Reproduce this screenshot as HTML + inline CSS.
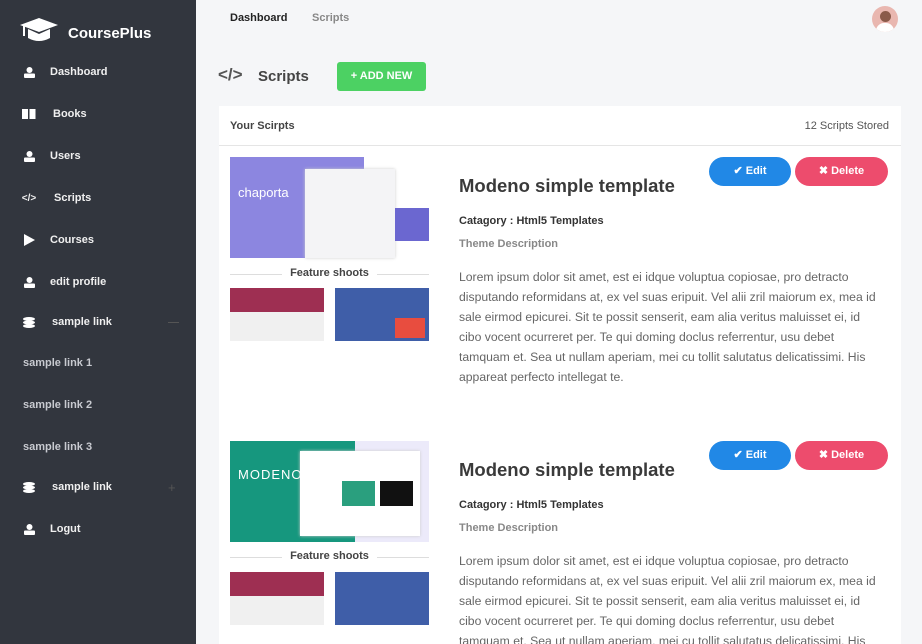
<!DOCTYPE html>
<html><head><meta charset="utf-8"><style>
*{margin:0;padding:0;box-sizing:border-box}
html,body{width:922px;height:644px;overflow:hidden}
body{background:#f5f6f8;font-family:"Liberation Sans",sans-serif;position:relative}
.sb{position:absolute;left:0;top:0;width:196px;height:644px;background:#32363e;color:#fff}
.logo{position:absolute;left:20px;top:17px;display:flex;align-items:center}
.logo span{font-weight:bold;font-size:15px;margin-left:10px;margin-top:8px}
.it{position:absolute;left:0;font-size:11px;font-weight:bold;color:#f0f0f0;display:flex;align-items:center}
.it i{display:inline-flex;justify-content:center;width:16px;margin-left:21px;margin-right:13px;font-style:normal}
.sub{position:absolute;left:23px;font-size:11px;font-weight:bold;color:#c8cad0}
.top{position:absolute;left:230px;top:12px;font-size:11px;font-weight:bold}
.card{position:absolute;left:219px;top:106px;width:682px;height:540px;background:#fff;overflow:hidden}
.hd{height:40px;border-bottom:1px solid #e5e5e5;display:flex;justify-content:space-between;align-items:center;padding:0 12px 0 11px;font-size:11px}
.btn{position:absolute;height:29px;border-radius:15px;color:#fff;font-size:11px;font-weight:bold;text-align:center;line-height:29px}
.h{position:absolute;left:240px;font-size:18.5px;font-weight:bold;color:#3a3a3a}
.cat{position:absolute;left:240px;font-size:11px;font-weight:bold;color:#333}
.td{position:absolute;left:240px;font-size:11px;font-weight:bold;color:#888}
.p{position:absolute;left:240px;white-space:nowrap;font-size:12.2px;line-height:20px;color:#666}
.fs{position:absolute;left:11px;width:199px;font-size:11px;font-weight:bold;color:#444;text-align:center}
.fs:before,.fs:after{content:"";position:absolute;top:7px;width:52px;border-top:1px solid #ddd}
.fs:before{left:0}.fs:after{right:0}
</style></head><body>
<div class="sb">
 <div class="logo"><svg width="38" height="24" viewBox="0 0 38 24"><polygon points="19,0 38,7 19,14 0,7" fill="#fff"/><path d="M8,11 V20 Q19,26 30,20 V11 L19,16 Z" fill="#fff"/><rect x="3" y="8" width="2" height="10" fill="#fff"/></svg><span>CoursePlus</span></div>
 <div class="it" style="top:66px"><i><svg width="11" height="11"><circle cx="5.5" cy="3" r="3" fill="#fff"/><rect x="0" y="6.5" width="11" height="4.5" rx="1" fill="#fff"/></svg></i>Dashboard</div>
 <div class="it" style="top:108px"><i><svg width="14" height="10"><rect x="0" y="0" width="6" height="10" fill="#fff"/><rect x="7.5" y="0" width="6" height="10" fill="#fff"/></svg></i><b style="margin-left:3px">Books</b></div>
 <div class="it" style="top:150px"><i><svg width="11" height="11"><circle cx="5.5" cy="3" r="3" fill="#fff"/><rect x="0" y="6.5" width="11" height="4.5" rx="1" fill="#fff"/></svg></i>Users</div>
 <div class="it" style="top:192px"><i style="font-size:10px">&lt;/&gt;</i><b style="margin-left:4px">Scripts</b></div>
 <div class="it" style="top:234px"><i><svg width="11" height="12"><polygon points="0,0 11,6 0,12" fill="#fff"/></svg></i>Courses</div>
 <div class="it" style="top:276px"><i><svg width="11" height="11"><circle cx="5.5" cy="3" r="3" fill="#fff"/><rect x="0" y="6.5" width="11" height="4.5" rx="1" fill="#fff"/></svg></i>edit profile</div>
 <div class="it" style="top:316px"><i><svg width="12" height="11"><ellipse cx="6" cy="2" rx="6" ry="2" fill="#fff"/><ellipse cx="6" cy="5.5" rx="6" ry="2" fill="#fff"/><ellipse cx="6" cy="9" rx="6" ry="2" fill="#fff"/></svg></i><b style="margin-left:2px">sample link</b></div>
 <div style="position:absolute;left:168px;top:322px;width:11px;border-top:1px solid #555"></div>
 <div class="sub" style="top:357px">sample link 1</div>
 <div class="sub" style="top:399px">sample link 2</div>
 <div class="sub" style="top:441px">sample link 3</div>
 <div class="it" style="top:481px"><i><svg width="12" height="11"><ellipse cx="6" cy="2" rx="6" ry="2" fill="#fff"/><ellipse cx="6" cy="5.5" rx="6" ry="2" fill="#fff"/><ellipse cx="6" cy="9" rx="6" ry="2" fill="#fff"/></svg></i><b style="margin-left:2px">sample link</b></div>
 <div style="position:absolute;left:168px;top:480px;color:#555;font-size:13px">+</div>
 <div class="it" style="top:523px"><i><svg width="11" height="11"><circle cx="5.5" cy="3" r="3" fill="#fff"/><rect x="0" y="6.5" width="11" height="4.5" rx="1" fill="#fff"/></svg></i>Logut</div>
</div>
<div class="top" style="color:#222">Dashboard</div>
<div class="top" style="left:312px;color:#888">Scripts</div>
<div style="position:absolute;left:872px;top:6px;width:26px;height:26px;border-radius:50%;background:#e9b7b0;overflow:hidden"><div style="margin:5px auto 0;width:11px;height:11px;border-radius:50%;background:#8a5a4a"></div><div style="margin:1px auto 0;width:18px;height:10px;border-radius:8px 8px 0 0;background:#fff"></div></div>
<div style="position:absolute;left:218px;top:65px;font-size:17px;font-weight:bold;color:#555">&lt;/&gt;</div>
<div style="position:absolute;left:258px;top:68px;font-size:15px;font-weight:bold;color:#444">Scripts</div>
<div style="position:absolute;left:337px;top:62px;width:89px;height:29px;background:#4cd163;border-radius:3px;color:#fff;font-size:11px;font-weight:bold;line-height:29px;text-align:center">+ ADD NEW</div>
<div class="card">
 <div class="hd"><b style="color:#444">Your Scirpts</b><span style="color:#555">12 Scripts Stored</span></div>
 <div style="position:absolute;left:11px;top:51px;width:199px;height:101px;background:#fff">
  <div style="position:absolute;left:0;top:0;width:134px;height:101px;background:#8c86e0"></div>
  <div style="position:absolute;left:8px;top:28px;color:#fff;font-size:13px">chaporta</div>
  <div style="position:absolute;left:75px;top:12px;width:90px;height:89px;background:#f4f4f6;box-shadow:0 0 3px #ccc"></div>
  <div style="position:absolute;left:165px;top:51px;width:34px;height:33px;background:#6b67d0"></div>
 </div>
 <div class="fs" style="top:161px">Feature shoots</div>
 <div style="position:absolute;left:11px;top:182px;width:94px;height:53px;background:#f0f0f0;border-top:24px solid #9e2f52"></div>
 <div style="position:absolute;left:116px;top:182px;width:94px;height:53px;background:#3f5ea8"><div style="margin:30px 0 0 60px;width:30px;height:20px;background:#e84d3f"></div></div>
 <div class="btn" style="left:490px;top:51px;width:82px;background:#2188e6">&#10004; Edit</div>
 <div class="btn" style="left:576px;top:51px;width:93px;background:#ed4c6d">&#10006; Delete</div>
 <div class="h" style="top:69px">Modeno simple template</div>
 <div class="cat" style="top:109px">Catagory : Html5 Templates</div>
 <div class="td" style="top:132px">Theme Description</div>
 <div class="p" style="top:161px">Lorem ipsum dolor sit amet, est ei idque voluptua copiosae, pro detracto<br>disputando reformidans at, ex vel suas eripuit. Vel alii zril maiorum ex, mea id<br>sale eirmod epicurei. Sit te possit senserit, eam alia veritus maluisset ei, id<br>cibo vocent ocurreret per. Te qui doming doclus referrentur, usu debet<br>tamquam et. Sea ut nullam aperiam, mei cu tollit salutatus delicatissimi. His<br>appareat perfecto intellegat te.</div>
 <div style="position:absolute;left:11px;top:335px;width:199px;height:101px;background:#eceafa">
  <div style="position:absolute;left:0;top:0;width:125px;height:101px;background:#16977e"></div>
  <div style="position:absolute;left:8px;top:26px;color:#fff;font-size:13px;letter-spacing:1px">MODENO</div>
  <div style="position:absolute;left:70px;top:10px;width:120px;height:85px;background:#fff;box-shadow:0 0 3px #ccc"></div>
  <div style="position:absolute;left:112px;top:40px;width:33px;height:25px;background:#2a9f7e"></div>
  <div style="position:absolute;left:150px;top:40px;width:33px;height:25px;background:#111"></div>
 </div>
 <div class="fs" style="top:444px">Feature shoots</div>
 <div style="position:absolute;left:11px;top:466px;width:94px;height:53px;background:#f0f0f0;border-top:24px solid #9e2f52"></div>
 <div style="position:absolute;left:116px;top:466px;width:94px;height:53px;background:#3f5ea8"></div>
 <div class="btn" style="left:490px;top:335px;width:82px;background:#2188e6">&#10004; Edit</div>
 <div class="btn" style="left:576px;top:335px;width:93px;background:#ed4c6d">&#10006; Delete</div>
 <div class="h" style="top:353px">Modeno simple template</div>
 <div class="cat" style="top:393px">Catagory : Html5 Templates</div>
 <div class="td" style="top:416px">Theme Description</div>
 <div class="p" style="top:445px">Lorem ipsum dolor sit amet, est ei idque voluptua copiosae, pro detracto<br>disputando reformidans at, ex vel suas eripuit. Vel alii zril maiorum ex, mea id<br>sale eirmod epicurei. Sit te possit senserit, eam alia veritus maluisset ei, id<br>cibo vocent ocurreret per. Te qui doming doclus referrentur, usu debet<br>tamquam et. Sea ut nullam aperiam, mei cu tollit salutatus delicatissimi. His<br>appareat perfecto intellegat te.</div>
</div>
</body></html>
